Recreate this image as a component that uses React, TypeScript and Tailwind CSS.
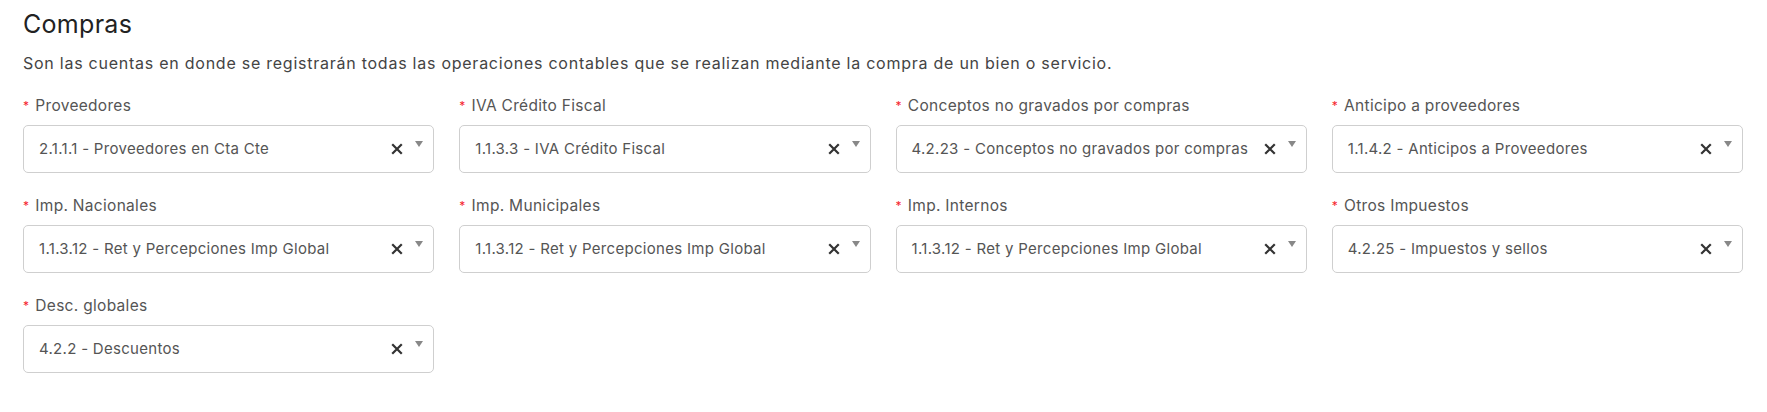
import React from "react";

const fields: { label: string; value: string }[] = [
  { label: "Proveedores", value: "2.1.1.1 - Proveedores en Cta Cte" },
  { label: "IVA Crédito Fiscal", value: "1.1.3.3 - IVA Crédito Fiscal" },
  { label: "Conceptos no gravados por compras", value: "4.2.23 - Conceptos no gravados por compras" },
  { label: "Anticipo a proveedores", value: "1.1.4.2 - Anticipos a Proveedores" },
  { label: "Imp. Nacionales", value: "1.1.3.12 - Ret y Percepciones Imp Global" },
  { label: "Imp. Municipales", value: "1.1.3.12 - Ret y Percepciones Imp Global" },
  { label: "Imp. Internos", value: "1.1.3.12 - Ret y Percepciones Imp Global" },
  { label: "Otros Impuestos", value: "4.2.25 - Impuestos y sellos" },
  { label: "Desc. globales", value: "4.2.2 - Descuentos" },
];

function Field({ label, value }: { label: string; value: string }) {
  return (
    <div className="flex flex-col">
      <div className="flex items-center h-[22px] text-[15.5px] text-[#555] tracking-[0.3px]">
        <span className="text-[#f5222d] text-[12px] mr-[6px] leading-none">*</span>
        <span>{label}</span>
      </div>
      <div className="mt-[8px] h-[48px] border border-[#cfcfcf] rounded-[5px] flex items-center pl-[15px] pr-[10px] bg-white">
        <span className="flex-1 min-w-0 whitespace-nowrap overflow-visible text-[15px] text-[#555] tracking-[0.3px]">{value}</span>
        <svg width="12" height="12" viewBox="0 0 12 12" className="shrink-0 ml-[4px] mr-[12px]">
          <path d="M2 2 L10 10 M10 2 L2 10" stroke="#333" strokeWidth="2.2" strokeLinecap="square" />
        </svg>
        <svg width="8" height="6" viewBox="0 0 8 6" className="shrink-0 mb-[10px]">
          <path d="M0 0 L8 0 L4 6 Z" fill="#888" />
        </svg>
      </div>
    </div>
  );
}

export default function App() {
  return (
    <div className="bg-white w-[1767px] h-[412px] pl-[23px] pr-[24px] pt-[8px]" style={{ fontFamily: 'Inter, sans-serif' }}>
      <h1 className="text-[25px] text-[#222] leading-[32px] tracking-[0.3px]">Compras</h1>
      <p className="mt-[12px] text-[16px] text-[#444] leading-[22px] tracking-[0.75px]">
        Son las cuentas en donde se registrarán todas las operaciones contables que se realizan mediante la compra de un bien o servicio.
      </p>
      <div className="mt-[21px] grid grid-cols-4 gap-x-[25px] gap-y-[22px]">
        {fields.map((f, i) => (
          <Field key={i} label={f.label} value={f.value} />
        ))}
      </div>
    </div>
  );
}
